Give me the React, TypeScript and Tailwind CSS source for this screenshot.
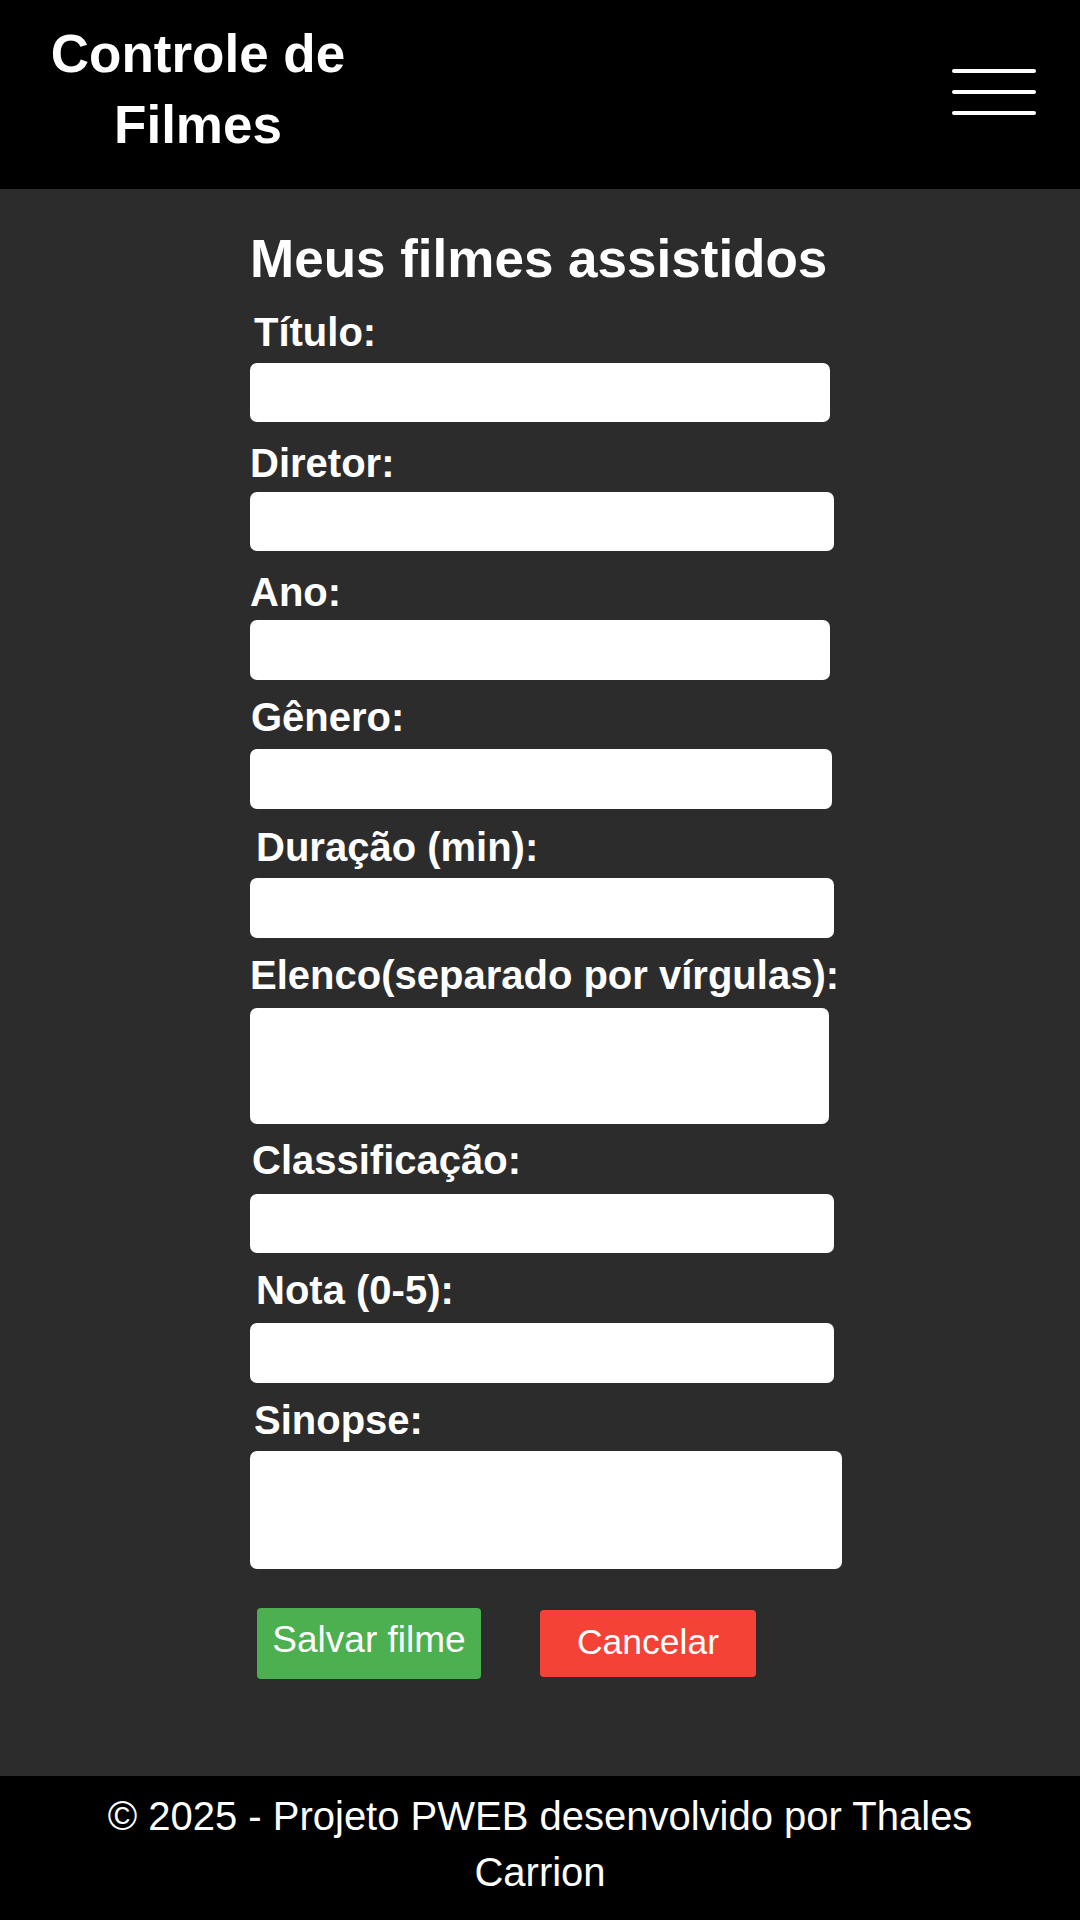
import React from "react";

type Field = {
  label: string;
  wrap: string;
  labelCls: string;
  boxCls: string;
  area?: boolean;
};

const fields: Field[] = [
  { label: "Título:", wrap: "mt-[21px]", labelCls: "pl-[4px] mb-[8px]", boxCls: "w-[580px] h-[59px]" },
  { label: "Diretor:", wrap: "mt-[19px]", labelCls: "pl-[0px] mb-[6px]", boxCls: "w-[584px] h-[59px]" },
  { label: "Ano:", wrap: "mt-[19px]", labelCls: "pl-[0px] mb-[5px]", boxCls: "w-[580px] h-[60px]" },
  { label: "Gênero:", wrap: "mt-[15px]", labelCls: "pl-[1px] mb-[9px]", boxCls: "w-[582px] h-[60px]" },
  { label: "Duração (min):", wrap: "mt-[16px]", labelCls: "pl-[6px] mb-[8px]", boxCls: "w-[584px] h-[60px]" },
  { label: "Elenco(separado por vírgulas):", wrap: "mt-[15px]", labelCls: "pl-[0px] mb-[10px]", boxCls: "w-[579px] h-[116px]", area: true },
  { label: "Classificação:", wrap: "mt-[14px]", labelCls: "pl-[2px] mb-[11px]", boxCls: "w-[584px] h-[59px]" },
  { label: "Nota (0-5):", wrap: "mt-[15px]", labelCls: "pl-[6px] mb-[10px]", boxCls: "w-[584px] h-[60px]" },
  { label: "Sinopse:", wrap: "mt-[15px]", labelCls: "pl-[4px] mb-[8px]", boxCls: "w-[592px] h-[118px]", area: true },
];

export default function App() {
  return (
    <div className="w-[1080px] min-h-[1920px] flex flex-col bg-black text-white font-['Liberation_Sans',Arial,sans-serif]">
      <header className="h-[189px] bg-black flex items-start justify-between">
        <div className="ml-[38px] mt-[18px] w-[320px] text-center font-bold text-[53px] leading-[71px]">
          Controle de Filmes
        </div>
        <div className="mt-[69px] mr-[44px] w-[84px] flex flex-col gap-[17px]">
          <span className="block h-[4px] w-full rounded-full bg-white" />
          <span className="block h-[4px] w-full rounded-full bg-white" />
          <span className="block h-[4px] w-full rounded-full bg-white" />
        </div>
      </header>

      <main className="bg-[#2c2c2c] pt-[39px] pb-[97px]">
        <div className="w-[580px] mx-auto flex flex-col">
          <h1 className="font-bold text-[53px] leading-[61px] whitespace-nowrap">Meus filmes assistidos</h1>
          {fields.map((f) => (
            <div key={f.label} className={"flex flex-col " + f.wrap}>
              <label className={"font-bold text-[40px] leading-[45px] whitespace-nowrap " + f.labelCls}>{f.label}</label>
              {f.area ? (
                <textarea className={"block bg-white rounded-[7px] resize-none text-black " + f.boxCls} />
              ) : (
                <input type="text" className={"block bg-white rounded-[7px] text-black " + f.boxCls} />
              )}
            </div>
          ))}
          <div className="mt-[39px] flex items-start">
            <button className="ml-[7px] w-[224px] h-[71px] bg-[#4caf50] rounded-[4px] text-white text-[37px] leading-[42px] flex items-center justify-center pb-[8px]">
              Salvar filme
            </button>
            <button className="ml-[59px] mt-[2px] w-[216px] h-[67px] bg-[#f44336] rounded-[4px] text-white text-[35.5px] leading-[40px] flex items-center justify-center pb-[3px]">
              Cancelar
            </button>
          </div>
        </div>
      </main>

      <footer className="bg-black px-[40px] pt-[12px] pb-[20px] text-center text-[40px] leading-[56px]">
        © 2025 - Projeto PWEB desenvolvido por Thales Carrion
      </footer>
    </div>
  );
}
